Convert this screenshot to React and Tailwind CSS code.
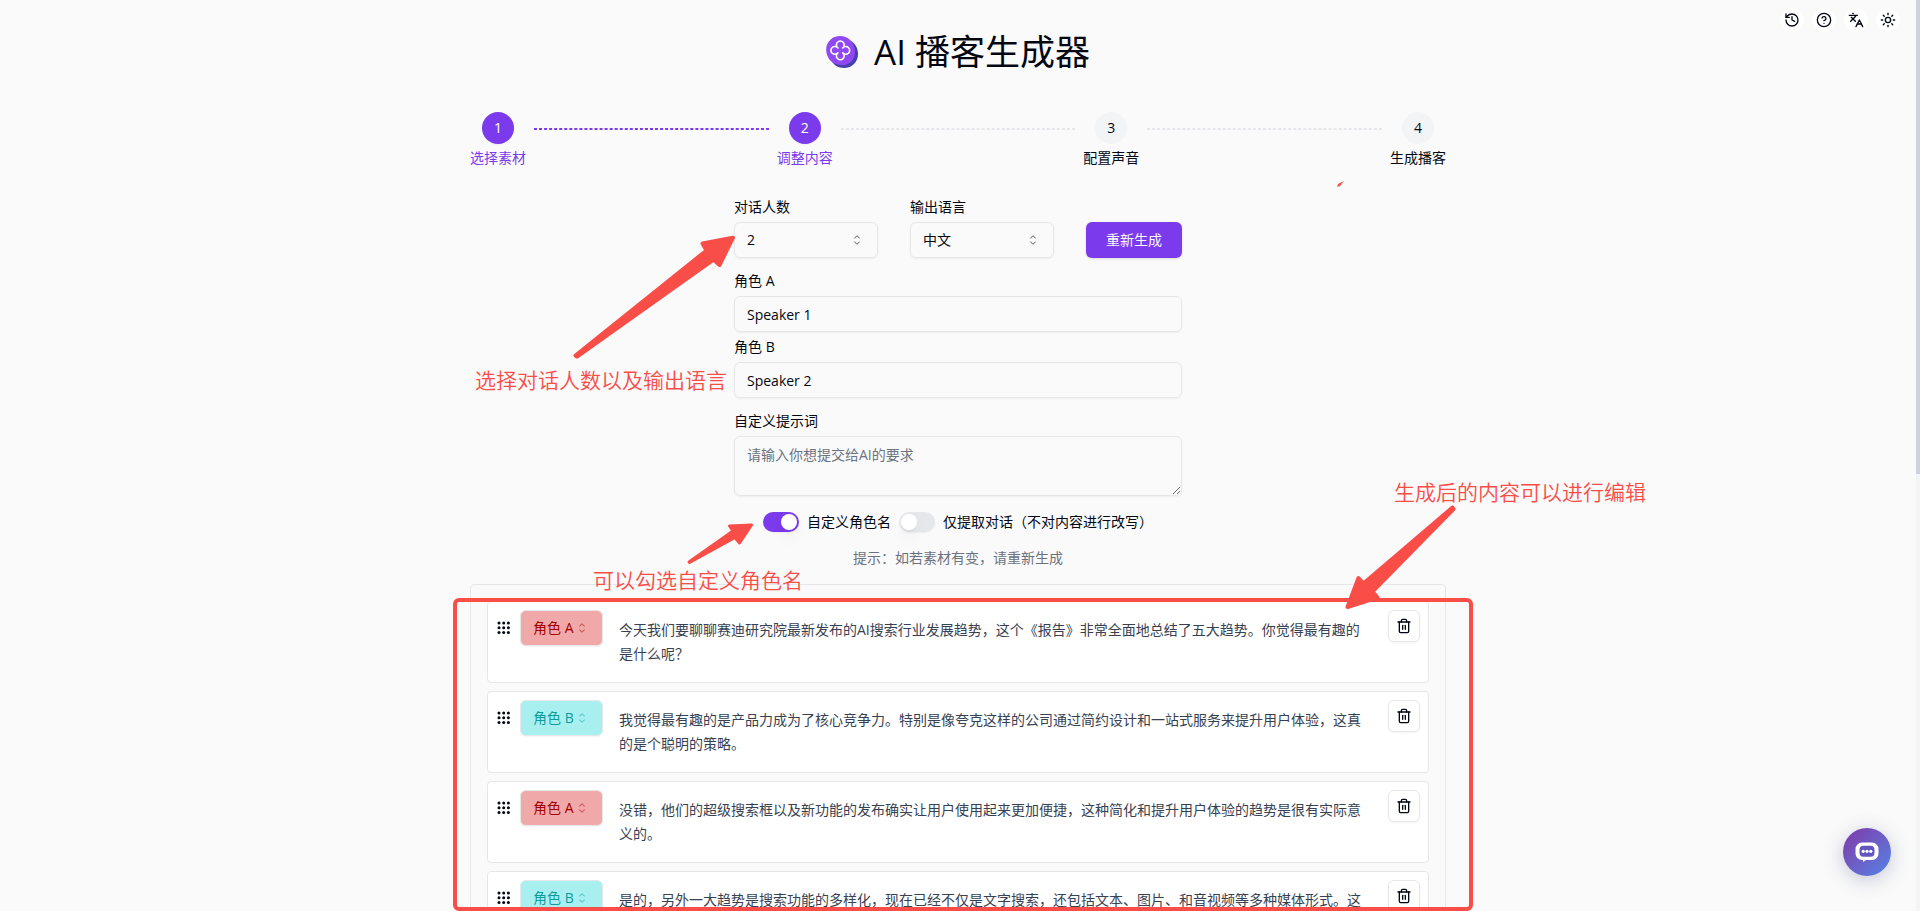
import React, { useState } from 'react'
import { CircleHelp, History, Languages, Sun, Trash2 } from 'lucide-react'
import clsx from 'clsx'

const STEPS = ['选择素材', '调整内容', '配置声音', '生成播客']

const LINES = [
    { id: 1, role: 'A', text: '今天我们要聊聊赛迪研究院最新发布的AI搜索行业发展趋势，这个《报告》非常全面地总结了五大趋势。你觉得最有趣的是什么呢？' },
    { id: 2, role: 'B', text: '我觉得最有趣的是产品力成为了核心竞争力。特别是像夸克这样的公司通过简约设计和一站式服务来提升用户体验，这真的是个聪明的策略。' },
    { id: 3, role: 'A', text: '没错，他们的超级搜索框以及新功能的发布确实让用户使用起来更加便捷，这种简化和提升用户体验的趋势是很有实际意义的。' },
    { id: 4, role: 'B', text: '是的，另外一大趋势是搜索功能的多样化，现在已经不仅是文字搜索，还包括文本、图片、和音视频等多种媒体形式。这' },
]

const field = 'w-full rounded-md border border-[#e5e7eb] bg-transparent px-3 text-sm shadow-xs outline-none'

function Caret() {
    return (
        <svg viewBox="0 0 15 15" fill="currentColor" className="pointer-events-none absolute right-[13px] top-1/2 h-4 w-4 -translate-y-1/2 opacity-50">
            <path d="M4.93179 5.43179C4.75605 5.60753 4.75605 5.89245 4.93179 6.06819C5.10753 6.24392 5.39245 6.24392 5.56819 6.06819L7.49999 4.13638L9.43179 6.06819C9.60753 6.24392 9.89245 6.24392 10.0682 6.06819C10.2439 5.89245 10.2439 5.60753 10.0682 5.43179L7.81819 3.18179C7.73379 3.0974 7.61933 3.04999 7.49999 3.04999C7.38064 3.04999 7.26618 3.0974 7.18179 3.18179L4.93179 5.43179ZM10.0682 9.56819C10.2439 9.39245 10.2439 9.10753 10.0682 8.93179C9.89245 8.75606 9.60753 8.75606 9.43179 8.93179L7.49999 10.8636L5.56819 8.93179C5.39245 8.75606 5.10753 8.75606 4.93179 8.93179C4.75605 9.10753 4.75605 9.39245 4.93179 9.56819L7.18179 11.8182C7.35753 11.9939 7.64245 11.9939 7.81819 11.8182L10.0682 9.56819Z" />
        </svg>
    )
}

function Logo() {
    return (
        <svg viewBox="0 0 32 32" className="h-8 w-8 shrink-0">
            <path d="M5 24 24 4.500C29 7 32 12 32 18 32 26 26 32 18 32 12 32 7.500 29 5 24Z" fill="#4540ad" />
            <path d="M14 0C20 0 24 3 26.500 7 29 11 29.500 16 28.500 20 27 26 21 29.500 15 29 9 28.500 4 26 2 21 -.5 16 -.5 10 2.500 6 5 2 9 0 14 0Z" fill="#9147f1" />
            <g transform="translate(14.3 14.4)" fill="none" stroke="#fff" strokeWidth="1.600" strokeLinejoin="round">
                <path d="M-2.400-2.400A3.900 3.900 0 1 1 2.400-2.400A3.900 3.900 0 1 1 2.400 2.400A3.900 3.900 0 1 1-2.400 2.400A3.900 3.900 0 1 1-2.400-2.400Z" />
            </g>
        </svg>
    )
}

function TopBar() {
    const items = [
        ['历史记录', History],
        ['帮助', CircleHelp],
        ['语言', Languages],
        ['主题', Sun],
    ]
    return (
        <nav className="absolute right-5 top-2 flex gap-2">
            {items.map(([label, Icon]) => (
                <button key={label} aria-label={label} className="flex h-6 w-6 items-center justify-center rounded-full bg-white">
                    <Icon className="h-4 w-4" />
                </button>
            ))}
        </nav>
    )
}

function Stepper({ current }) {
    return (
        <ol className="mt-10 flex items-start gap-2">
            {STEPS.map((name, i) => (
                <React.Fragment key={name}>
                    {i > 0 && (
                        <li aria-hidden="true" className={clsx('mt-4 flex-1 border border-dashed', i < current ? 'border-[#7c3aed]' : 'border-[#e5e7eb]')} />
                    )}
                    <li className="flex flex-col items-center gap-1 text-sm">
                        <span className={clsx('flex h-8 w-8 items-center justify-center rounded-full', i < current ? 'bg-[#7c3aed] text-white shadow-xs' : 'bg-gray-100')}>
                            {i + 1}
                        </span>
                        <span className={i < current ? 'text-[#7c3aed]' : ''}>{name}</span>
                    </li>
                </React.Fragment>
            ))}
        </ol>
    )
}

function SelectField({ id, label, options }) {
    return (
        <div className="flex flex-1 flex-col gap-2">
            <label htmlFor={id} className="text-sm leading-none">{label}</label>
            <div className="relative">
                <select id={id} className={clsx(field, 'h-9 appearance-none')}>
                    {options.map((o) => <option key={o}>{o}</option>)}
                </select>
                <Caret />
            </div>
        </div>
    )
}

function Switch({ id, label, defaultChecked }) {
    return (
        <div className="flex items-center gap-2">
            <input
                id={id}
                type="checkbox"
                role="switch"
                defaultChecked={defaultChecked}
                className="h-5 w-9 shrink-0 appearance-none rounded-full bg-[#e5e7eb] p-0.5 shadow-xs before:block before:h-4 before:w-4 before:rounded-full before:bg-white before:shadow-lg checked:bg-[#7c3aed] checked:before:translate-x-4"
            />
            <label htmlFor={id} className="text-sm leading-none">{label}</label>
        </div>
    )
}

function DialogueRow({ line, onRole, onText, onDelete }) {
    const isA = line.role === 'A'
    return (
        <li className="flex items-start rounded border border-[#e5e7eb] bg-white p-2">
            <svg viewBox="0 0 16 16" className="mr-2 mt-2.5 h-4 w-4 shrink-0 cursor-grab" fill="currentColor">
                {[3, 7.7, 12.4].map((y) => [3, 7.7, 12.4].map((x) => <circle key={x + '-' + y} cx={x} cy={y} r="1.5" />))}
            </svg>
            <div className={clsx('relative shrink-0', isA ? 'text-[#a30000]' : 'text-[#0d9c9c]')}>
                <select
                    aria-label="角色"
                    value={line.role}
                    onChange={(e) => onRole(line.id, e.target.value)}
                    className={clsx('h-9 w-[83px] appearance-none rounded-md border border-[#e5e7eb] px-3 text-sm shadow-xs outline-none', isA ? 'bg-[#f0a8a8]' : 'bg-[#a8f0f0]')}
                >
                    <option value="A">角色 A</option>
                    <option value="B">角色 B</option>
                </select>
                <Caret />
            </div>
            <textarea
                aria-label="对话内容"
                value={line.text}
                onChange={(e) => onText(line.id, e.target.value)}
                className="h-16 min-w-0 flex-1 resize-none overflow-hidden bg-transparent px-4 py-2 text-sm leading-6 text-[#374151] outline-none"
            />
            <button
                aria-label="删除"
                onClick={() => onDelete(line.id)}
                className="ml-2 flex h-8 w-8 shrink-0 items-center justify-center rounded-md border border-[#e5e7eb] shadow-xs"
            >
                <Trash2 className="h-4 w-4" />
            </button>
        </li>
    )
}

// Red guide marks drawn over the page
function Guide() {
    const note = 'absolute whitespace-nowrap text-[21px] font-[350] leading-7'
    return (
        <div className="pointer-events-none absolute inset-y-0 left-0 right-1 mx-auto max-w-[976px] text-[#f94d48]">
            <div className="absolute -left-[17px] -right-[27px] bottom-0 top-[598px] rounded-md border-4 border-[#f94d48]" />
            <svg viewBox="0 0 976 911" className="absolute left-0 top-0 h-[911px] w-[976px] overflow-visible" fill="currentColor" stroke="currentColor" strokeLinejoin="round">
                <g transform="translate(-470 0)">
                    <path strokeWidth="4" d="M575.500 355.500 706.500 250.500 702.500 243.500 733 237.700 719.500 265 713.500 259.500 577 356.500Z" />
                    <path strokeWidth="3" d="M689 562 733 531 729.500 526 751.500 525 739.500 543 735 537.500 689.500 562.500Z" />
                    <path strokeWidth="4" d="M1452.500 507.500 1363.500 583.500 1358.500 578 1347.500 607 1377.500 597.500 1372.500 591.500 1453.500 509Z" />
                    <path stroke="none" d="M1337 187 1338 184 1344 181 1340 186Z" />
                </g>
            </svg>
            <p className={clsx(note, 'left-[5px] top-[366px]')}>选择对话人数以及输出语言</p>
            <p className={clsx(note, 'left-[123px] top-[566px]')}>可以勾选自定义角色名</p>
            <p className={clsx(note, 'left-[924px] top-[478px]')}>生成后的内容可以进行编辑</p>
        </div>
    )
}

export default function App() {
    const [lines, setLines] = useState(LINES)

    const update = (id, patch) => setLines((prev) => prev.map((l) => (l.id === id ? { ...l, ...patch } : l)))

    return (
        <div className="relative h-screen overflow-hidden bg-[#fafafa] font-['Open_Sans','Noto_Sans_CJK_SC',sans-serif] text-gray-950">
            <div className="h-full overflow-y-auto pr-1 [scrollbar-width:none]">
                <main className="mx-auto max-w-5xl px-6 pt-8">
                    <header className="flex items-center justify-center gap-4">
                        <Logo />
                        <h1 className="text-[35px] leading-10">AI 播客生成器</h1>
                    </header>

                    <Stepper current={2} />

                    <form className="mx-auto mt-8 flex max-w-md flex-col gap-4" onSubmit={(e) => e.preventDefault()}>
                        <div className="flex items-end gap-8">
                            <SelectField id="count" label="对话人数" options={['2', '1', '3']} />
                            <SelectField id="lang" label="输出语言" options={['中文', 'English']} />
                            <button type="submit" className="h-9 w-24 rounded-md bg-[#7c3aed] text-sm text-gray-50 shadow-sm">重新生成</button>
                        </div>
                        <div className="flex flex-col gap-2">
                            <label htmlFor="role-a" className="text-sm leading-none">角色 A</label>
                            <input id="role-a" defaultValue="Speaker 1" className={clsx(field, 'h-9')} />
                            <label htmlFor="role-b" className="text-sm leading-none">角色 B</label>
                            <input id="role-b" defaultValue="Speaker 2" className={clsx(field, 'h-9')} />
                        </div>
                        <div className="flex flex-col gap-2">
                            <label htmlFor="prompt" className="text-sm leading-none">自定义提示词</label>
                            <textarea id="prompt" placeholder="请输入你想提交给AI的要求" className={clsx(field, 'h-[60px] resize-y py-2 placeholder:text-[#6b7280]')} />
                        </div>
                        <div className="flex items-center justify-center gap-2">
                            <Switch id="custom-role" label="自定义角色名" defaultChecked />
                            <Switch id="extract-only" label="仅提取对话（不对内容进行改写）" />
                        </div>
                        <p className="text-center text-sm text-[#6b7280]">提示：如若素材有变，请重新生成</p>
                    </form>

                    <ul className="mt-4 flex flex-col gap-2 rounded border border-[#e5e7eb] p-4">
                        {lines.map((line) => (
                            <DialogueRow
                                key={line.id}
                                line={line}
                                onRole={(id, role) => update(id, { role })}
                                onText={(id, text) => update(id, { text })}
                                onDelete={(id) => setLines((prev) => prev.filter((l) => l.id !== id))}
                            />
                        ))}
                    </ul>
                </main>
            </div>

            <TopBar />
            <Guide />

            {/* Scroll bar */}
            <div className="absolute inset-y-0 right-0 w-1 bg-gray-100">
                <div className="h-[52%] bg-[#cfd1dc]" />
            </div>

            {/* Chat launcher */}
            <button
                aria-label="在线客服"
                className="absolute bottom-[35px] right-[29px] flex h-12 w-12 items-center justify-center rounded-full bg-linear-to-br from-[#7b35a8] to-[#4a83e6] shadow-[0_4px_20px_rgba(80,90,140,0.3)]"
            >
                <svg viewBox="0 0 24 20" className="h-5 w-6">
                    <path d="M7 0.500h10a6.500 6.500 0 0 1 6.500 6.500v4.500a6.500 6.500 0 0 1-6.500 6.500h-6L8 20v-2H7a6.500 6.500 0 0 1-6.500-6.500V7A6.500 6.500 0 0 1 7 .5Z" fill="#fff" />
                    <rect x="4.500" y="3.800" width="15" height="11" rx="4" fill="#6355be" />
                    <circle cx="8.200" cy="9.300" r="1.600" fill="#fff" />
                    <circle cx="12" cy="9.300" r="1.600" fill="#fff" />
                    <circle cx="15.800" cy="9.300" r="1.600" fill="#fff" />
                </svg>
            </button>
        </div>
    )
}
